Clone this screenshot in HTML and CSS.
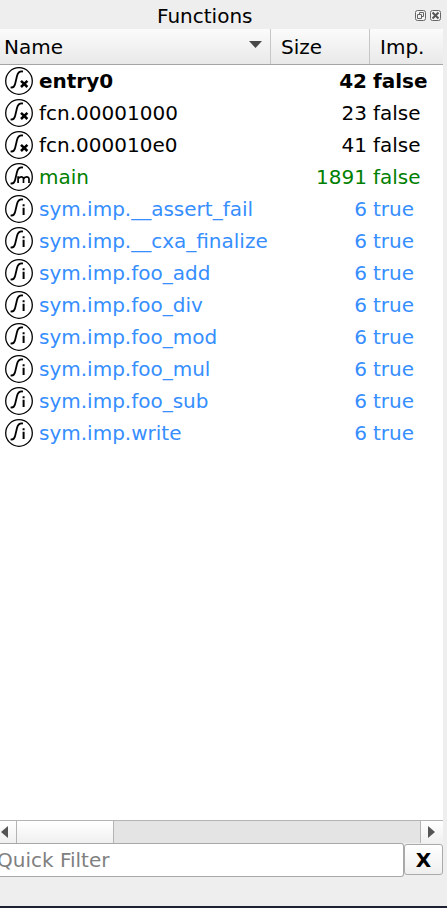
FILE: index.html
```html
<!DOCTYPE html>
<html lang="en">
<head>
<meta charset="utf-8">
<title>Functions</title>
<link rel="stylesheet" href="styles.css">
</head>
<body>
<svg class="defs" width="0" height="0" aria-hidden="true">
  <symbol id="fn" viewBox="0 0 28 28">
    <circle cx="14" cy="14" r="13.3" fill="#fff" stroke="#000" stroke-width="1.3"/>
    <path d="M5.6 20.4C8.4 20.9 9.4 19.8 10.1 17L12 9C12.8 5.4 14.2 4 18 4.5" fill="none" stroke="#000" stroke-width="1.8"/>
  </symbol>
  <symbol id="fx" viewBox="0 0 28 28"><use href="#fn"/><path d="M16 13.8L22.4 20M22.4 13.8L16 20" stroke="#000" stroke-width="2.5"/></symbol>
  <symbol id="fm" viewBox="0 0 28 28"><use href="#fn"/><path d="M13.1 20V13.2M13.1 16C14.2 13.3 18.5 13.2 18.5 16V20M18.5 16C19.6 13.3 24 13.2 24 16V20" fill="none" stroke="#000" stroke-width="1.7"/></symbol>
  <symbol id="fi" viewBox="0 0 28 28"><use href="#fn"/><path d="M18.6 12.8V20M18.6 9.2V11.2" stroke="#000" stroke-width="2"/></symbol>
</svg>
<div class="dock">
  <header class="title">
    <h1>Functions</h1>
    <div class="controls">
      <svg width="12" height="12" viewBox="0 0 12 12"><rect class="frame" x=".5" y=".5" width="10" height="10" rx="2"/><path class="thin" d="M4.5 4.5V2.5H8.5V6.5H6.5M2.5 4.5H6.5V8.5H2.5Z"/></svg>
      <svg width="12" height="12" viewBox="0 0 12 12"><rect class="frame" x=".5" y=".5" width="10" height="10" rx="2"/><path class="cross" d="M2.5 2.5L8.5 8.5M8.5 2.5L2.5 8.5"/></svg>
    </div>
  </header>
  <div class="grid head"><div>Name<i class="sort"></i></div><div>Size</div><div>Imp.</div></div>
  <main class="rows">
    <div class="grid row entry"><span><svg><use href="#fx"/></svg>entry0</span><span>42</span><span>false</span></div>
    <div class="grid row"><span><svg><use href="#fx"/></svg>fcn.00001000</span><span>23</span><span>false</span></div>
    <div class="grid row"><span><svg><use href="#fx"/></svg>fcn.000010e0</span><span>41</span><span>false</span></div>
    <div class="grid row main"><span><svg><use href="#fm"/></svg>main</span><span>1891</span><span>false</span></div>
    <div class="grid row import"><span><svg><use href="#fi"/></svg>sym.imp.__assert_fail</span><span>6</span><span>true</span></div>
    <div class="grid row import"><span><svg><use href="#fi"/></svg>sym.imp.__cxa_finalize</span><span>6</span><span>true</span></div>
    <div class="grid row import"><span><svg><use href="#fi"/></svg>sym.imp.foo_add</span><span>6</span><span>true</span></div>
    <div class="grid row import"><span><svg><use href="#fi"/></svg>sym.imp.foo_div</span><span>6</span><span>true</span></div>
    <div class="grid row import"><span><svg><use href="#fi"/></svg>sym.imp.foo_mod</span><span>6</span><span>true</span></div>
    <div class="grid row import"><span><svg><use href="#fi"/></svg>sym.imp.foo_mul</span><span>6</span><span>true</span></div>
    <div class="grid row import"><span><svg><use href="#fi"/></svg>sym.imp.foo_sub</span><span>6</span><span>true</span></div>
    <div class="grid row import"><span><svg><use href="#fi"/></svg>sym.imp.write</span><span>6</span><span>true</span></div>
  </main>
  <div class="scroll">
    <div class="step left"><svg width="7" height="12" viewBox="0 0 7 12"><path d="M7 0V12L0 6Z"/></svg></div>
    <div class="thumb"></div>
    <div class="step right"><svg width="7" height="12" viewBox="0 0 7 12"><path d="M0 0V12L7 6Z"/></svg></div>
  </div>
  <footer class="filter"><div class="field">Quick Filter</div><div class="clear">X</div></footer>
</div>
</body>
</html>
```
FILE: styles.css
```css
* { box-sizing: border-box; }
body {
  margin: 0;
  height: 908px;
  overflow: hidden;
  background: #eeeeee;
  border-bottom: 2px solid #1e2132;
  font: 20px/32px "DejaVu Sans", sans-serif;
  color: #000;
}
.defs { position: absolute; }
.dock { width: 443px; height: 906px; display: flex; flex-direction: column; }
.title { height: 29px; flex: none; display: flex; align-items: flex-start; justify-content: flex-end; }
.title h1 { margin: 0; width: 258px; font-size: 20px; font-weight: 400; }
.controls { display: flex; gap: 3px; padding-top: 10px; margin-right: 1px; }
.controls svg { display: block; }
.frame { fill: #f4f4f4; stroke: #666; }
.thin { fill: none; stroke: #666; }
.cross { stroke: #555; stroke-width: 2; }
.grid { display: grid; grid-template-columns: 271px 99px 73px; }
.head {
  height: 36px;
  flex: none;
  line-height: 36px;
  border-bottom: 1px solid #a5a5a5;
  background: linear-gradient(#fbfbfb, #e9e9e9);
}
.head div { padding-left: 10px; height: 35px; border-right: 1px solid #c6c6c6; }
.head div:first-child { display: flex; justify-content: space-between; padding: 0 8px 0 4px; }
.head div:last-child { border-right: 0; }
.sort { margin-top: 12px; width: 13px; height: 7px; background: #484848; clip-path: polygon(0 0, 100% 0, 50% 100%); }
.rows { flex: 1; background: #fff; }
.row { height: 32px; white-space: nowrap; }
.row span:first-child { display: flex; align-items: center; gap: 6px; padding-left: 5px; }
.row svg { width: 28px; height: 28px; flex: none; }
.row span:nth-child(2) { text-align: right; padding-right: 3px; }
.row span:last-child { padding-left: 3px; }
.entry { font-weight: 700; }
.main { color: #008000; }
.import { color: #368eff; }
.scroll { height: 23px; flex: none; display: flex; background: #e4e4e4; border-top: 1px solid #b4b4b4; }
.step { display: flex; align-items: center; background: linear-gradient(#fff, #f0f0f0); fill: #555; }
.left { width: 17px; padding-left: 1px; border-right: 1px solid #b4b4b4; }
.right { width: 23px; margin-left: auto; padding-left: 7px; border-left: 1px solid #b4b4b4; }
.thumb { width: 97px; border-right: 1px solid #b4b4b4; background: linear-gradient(#fff, #f0f0f0); }
.filter { height: 63px; flex: none; display: flex; align-items: flex-start; }
.field {
  width: 404px;
  height: 34px;
  border: 1px solid #a8a8a8;
  border-left: 0;
  border-radius: 0 3px 3px 0;
  background: #fff;
  color: #808080;
  text-indent: -3px;
}
.clear {
  width: 39px;
  height: 31px;
  margin: 1px 0 0;
  border: 1px solid #aaa;
  border-radius: 3px;
  background: linear-gradient(#fff, #efefef);
  font-weight: 700;
  line-height: 30px;
  text-align: center;
}
```
